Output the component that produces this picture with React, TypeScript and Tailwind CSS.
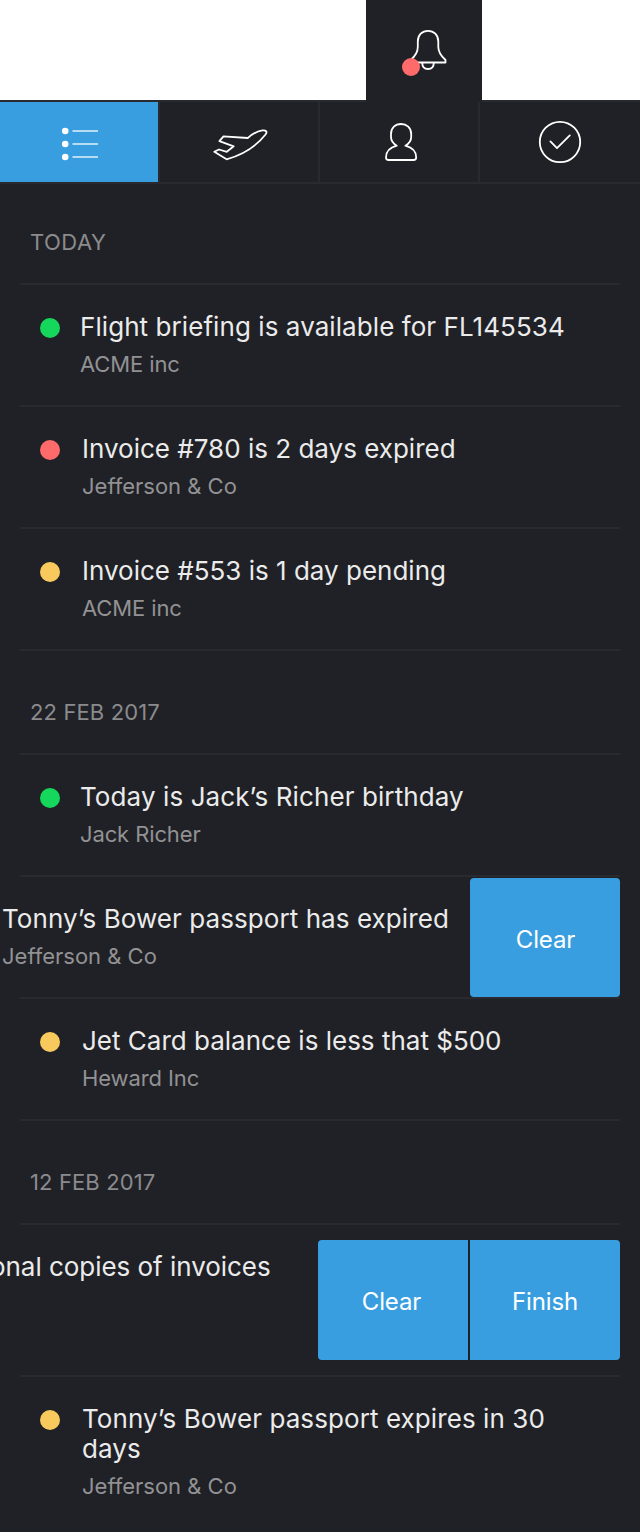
import React from "react";

type Tone = "green" | "red" | "amber";

const tones: Record<Tone, string> = {
  green: "bg-[#14d75c]",
  red: "bg-[#ff6b6b]",
  amber: "bg-[#f8ca5e]",
};

const titleClass = "text-[26px] leading-[30px] text-[#ebebeb]";
const noteClass = "mt-[7px] text-[22px] leading-[30px] text-[#929294]";

function BellIcon() {
  return (
    <svg width="116" height="100" viewBox="0 0 116 100" fill="none" stroke="white" strokeWidth="1.8">
      <path d="M44.5 62.5H79.5V60C74.5 55.5 72.3 52 72.3 47V41.5C72.3 35 67.8 30.8 62 30.8S51.8 35 51.8 41.5V47C51.8 52 49.5 56 44.5 60Z" strokeLinejoin="round" />
      <path d="M56.2 62.5C56.2 66.5 58.5 69 62 69S67.8 66.5 67.8 62.5" />
      <circle cx="45" cy="67" r="9" fill="#ff6b6b" stroke="none" />
    </svg>
  );
}

function ListIcon() {
  return (
    <svg width="158" height="80" viewBox="0 0 158 80" fill="white">
      <circle cx="65.2" cy="29" r="3.3" />
      <circle cx="65.2" cy="42" r="3.3" />
      <circle cx="65.2" cy="55" r="3.3" />
      <path d="M72.5 28.9H98M72.5 41.9H98M72.5 54.9H98" stroke="white" strokeOpacity=".85" strokeWidth="1.5" />
    </svg>
  );
}

function PlaneIcon() {
  return (
    <svg width="158" height="80" viewBox="0 0 158 80" fill="none" stroke="white" strokeWidth="1.8" strokeLinejoin="round">
      <path d="M63.5 34.3L87.8 36C93 31.5 98 28.8 102.5 28.4C106.5 28.2 107.5 29.8 105.5 32.5C96.5 44 82 53 66.6 57.3L54.3 49.8L59 47.5L66.8 49.8L73.7 44.3L59.4 39.2Z" />
    </svg>
  );
}

function PersonIcon() {
  return (
    <svg width="158" height="80" viewBox="0 0 158 80" fill="none" stroke="white" strokeWidth="1.8" strokeLinejoin="round">
      <path d="M76.8 43.7C73 41.5 71 38.5 71 35V32C71 25.8 75.3 22 81 22S91.2 25.8 91.2 32V35C91.2 38.5 89.2 41.5 85.4 43.7C92.3 45.5 96.2 49.7 96.2 55.5C96.2 57.3 95.4 58 93.6 58H68.6C66.8 58 66 57.3 66 55.5C66 49.7 69.9 45.5 76.8 43.7Z" />
    </svg>
  );
}

function CheckIcon() {
  return (
    <svg width="160" height="80" viewBox="0 0 160 80" fill="none" stroke="white" strokeWidth="1.8">
      <circle cx="80" cy="40" r="20.2" />
      <path d="M70.4 39.4L77 46.2L89.8 33.4" strokeLinecap="round" strokeLinejoin="round" />
    </svg>
  );
}

function SectionHeading({ first, children }: { first?: boolean; children: React.ReactNode }) {
  return (
    <h2
      className={
        (first ? "pt-[43px] h-[101px] tracking-[0.5px]" : "pt-[46px] h-[104px] tracking-[0.12px]") +
        " border-b-2 border-[#292a30] pl-[10px] text-[22px] leading-[30px] font-normal text-[#8b8b8d]"
      }
    >
      {children}
    </h2>
  );
}

type RowProps = {
  tone: Tone;
  title: string;
  note: string;
  gap: string;
  titleTracking?: string;
  noteTracking?: string;
  last?: boolean;
};

function Row({ tone, title, note, gap, titleTracking = "", noteTracking = "", last }: RowProps) {
  return (
    <li className={"flex pl-5 pt-[27px] " + (last ? "h-[155px]" : "h-[122px] border-b-2 border-[#292a30]")}>
      <span className={"mt-1.5 size-5 shrink-0 rounded-full " + tones[tone]} />
      <div className={"flex-1 pr-10 " + gap}>
        <p className={titleClass + " " + titleTracking}>{title}</p>
        <p className={noteClass + " " + noteTracking}>{note}</p>
      </div>
    </li>
  );
}

export default function App() {
  const action = "flex w-[150px] items-center justify-center bg-[#389edf] pt-1 text-[24px] tracking-[-0.15px] text-white";
  return (
    <main className="h-[1532px] w-[640px] overflow-hidden bg-[#202126] font-['Inter',sans-serif]">
      <header className="flex h-[102px] items-start">
        <div className="h-[102px] w-[366px] border-b-2 border-[#292a30] bg-white" />
        <button className="block w-[116px]"><BellIcon /></button>
        <div className="h-[102px] w-[158px] border-b-2 border-[#292a30] bg-white" />
      </header>
      <nav className="flex h-[82px] border-b-2 border-[#292a30]">
        <button className="w-[160px] border-r-2 border-[#292a30] bg-[#389edf]"><ListIcon /></button>
        <button className="w-[160px] border-r-2 border-[#292a30]"><PlaneIcon /></button>
        <button className="w-[160px] border-r-2 border-[#292a30]"><PersonIcon /></button>
        <button className="w-[160px]"><CheckIcon /></button>
      </nav>
      <div className="px-5">
        <SectionHeading first>TODAY</SectionHeading>
        <ul>
          <Row tone="green" title="Flight briefing is available for FL145534" note="ACME inc" gap="pl-5" titleTracking="tracking-[0.07px]" noteTracking="tracking-[-0.12px]" />
          <Row tone="red" title="Invoice #780 is 2 days expired" note="Jefferson & Co" gap="pl-[22px]" />
          <Row tone="amber" title="Invoice #553 is 1 day pending" note="ACME inc" gap="pl-[22px]" noteTracking="tracking-[-0.12px]" />
        </ul>
        <SectionHeading>22 FEB 2017</SectionHeading>
        <ul>
          <Row tone="green" title="Today is Jack’s Richer birthday" note="Jack Richer" gap="pl-5" titleTracking="tracking-[0.1px]" noteTracking="tracking-[-0.12px]" />
          <li className="flex h-[122px] items-start justify-between border-b-2 border-[#292a30]">
            <div className="-ml-[18px] pt-[27px]">
              <p className={titleClass + " tracking-[0.07px] whitespace-nowrap"}>Tonny’s Bower passport has expired</p>
              <p className={noteClass}>Jefferson & Co</p>
            </div>
            <button className={action + " mt-px h-[119px] rounded pl-px"}>Clear</button>
          </li>
          <Row tone="amber" title="Jet Card balance is less that $500" note="Heward Inc" gap="pl-[22px]" noteTracking="tracking-[-0.1px]" />
        </ul>
        <SectionHeading>12 FEB 2017</SectionHeading>
        <ul>
          <li className="flex h-[152px] justify-between border-b-2 border-[#292a30]">
            <p className={titleClass + " -ml-[30px] pt-[27px] tracking-[-0.04px] whitespace-nowrap"}>onal copies of invoices</p>
            <div className="flex items-start gap-0.5 pt-[15px]">
              <button className={action + " h-[120px] rounded-l pr-[3px]"}>Clear</button>
              <button className={action + " h-[120px] rounded-r"}>Finish</button>
            </div>
          </li>
          <Row tone="amber" title="Tonny’s Bower passport expires in 30 days" note="Jefferson & Co" gap="pl-[22px]" titleTracking="tracking-[0.08px]" last />
        </ul>
      </div>
    </main>
  );
}
